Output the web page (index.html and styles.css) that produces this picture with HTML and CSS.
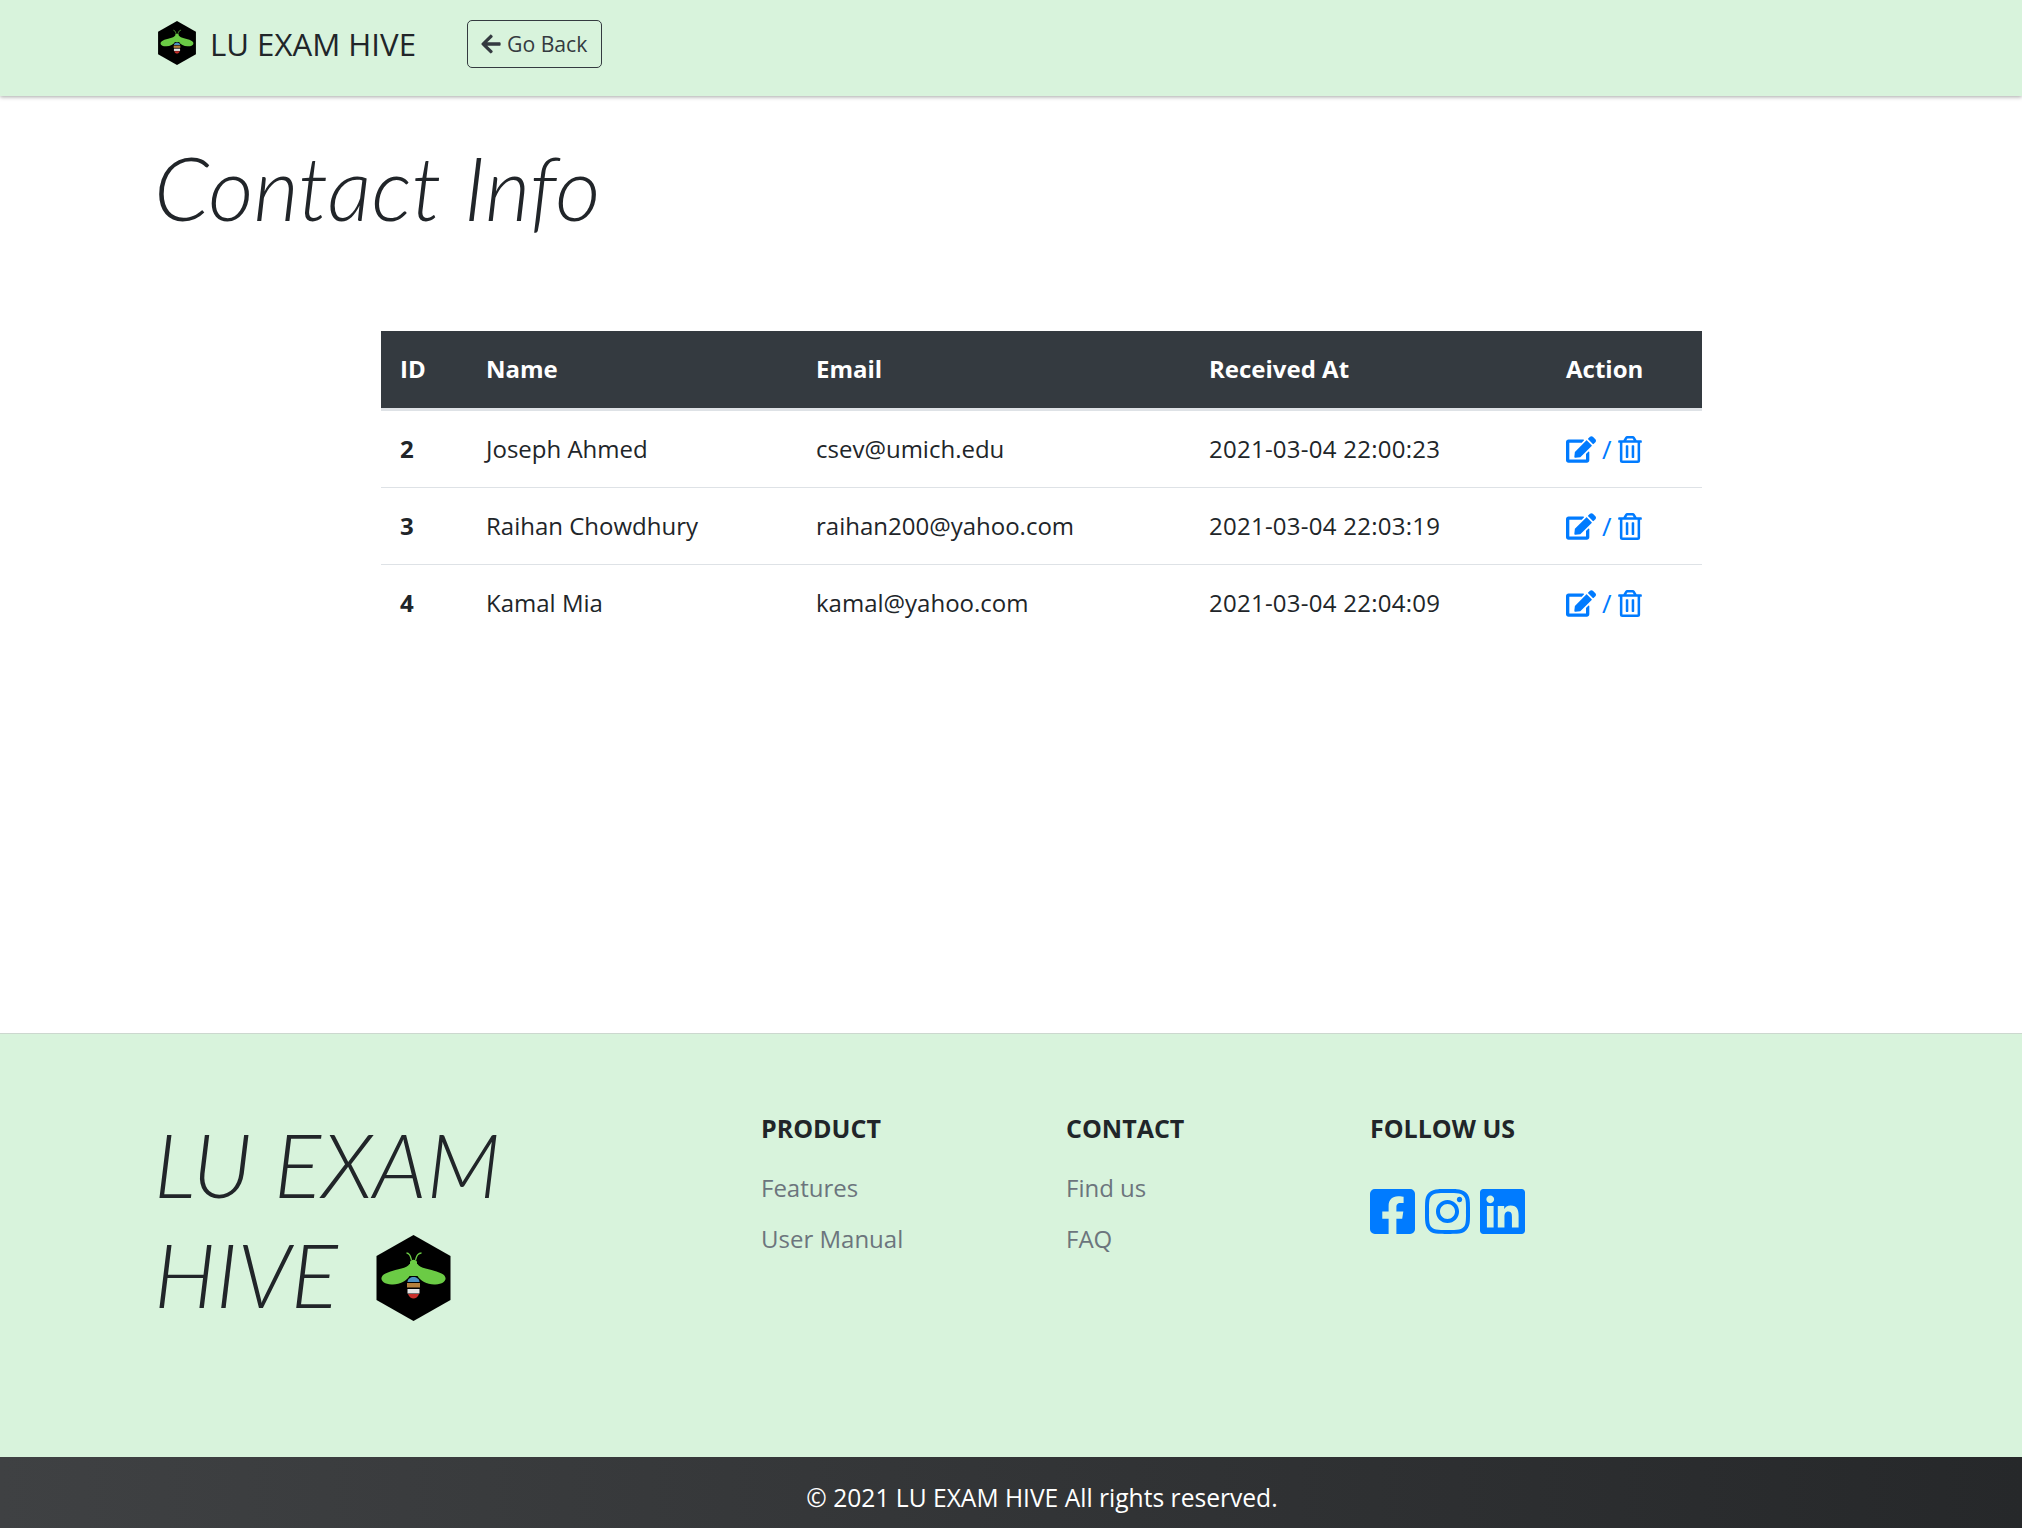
FILE: index.html
```html
<!DOCTYPE html>
<html lang="en">
<head>
    <meta charset="UTF-8">
    <title>LU EXAM HIVE - Contact Info</title>
    <link rel="stylesheet" href="styles.css">
</head>
<body>
    <svg class="icon-defs" width="0" height="0">
        <defs>
            <symbol id="bee" viewBox="0 0 74 86">
                <polygon points="37,0 74,21 74,65 37,86 0,65 0,21" fill="#000"/>
                <path d="M35 25 C34 20 32 18 30 18 M39 25 C40 20 42 18 45 18" fill="none" stroke="#6bcb45" stroke-width="1.3"/>
                <path d="M33.5 32 L33.5 27 C34 24 40 24 40.5 27 L40.5 32 Z" fill="#6bcb45"/>
                <path d="M33 29 C30 34 18 34 9 38.5 C2 42 4 49 15 49.5 C23 50 30 46 33 41 L41 41 C44 46 51 50 59 49.5 C70 49 72 42 65 38.5 C56 34 44 34 41 29 Z" fill="#6bcb45"/>
                <path d="M31 47 C31 44 34 42 37 42 C40 42 43 44 43 47 Z" fill="#4a90c2"/>
                <path d="M30.5 48 L43.5 48 L43.5 52.5 L30.5 52.5 Z" fill="#b5803c"/>
                <path d="M31 54 L43 54 L43 58.5 L31 58.5 Z" fill="#e6e6e6"/>
                <path d="M31.5 59 L42.5 59 C41.5 62 39 63.500 37 63.500 C35 63.500 32.500 62 31.5 59 Z" fill="#c9302c"/>
            </symbol>
            <symbol id="edit" viewBox="0 0 576 512">
                <path d="M402.6 83.2l90.2 90.2c3.8 3.8 3.8 10 0 13.8L274.4 405.6l-92.8 10.3c-12.4 1.4-22.9-9.1-21.5-21.5l10.3-92.8L388.8 83.2c3.8-3.8 10-3.8 13.8 0zm162-22.9l-48.8-48.8c-15.2-15.2-39.9-15.2-55.2 0l-35.4 35.4c-3.8 3.8-3.8 10 0 13.8l90.2 90.2c3.8 3.8 10 3.8 13.8 0l35.4-35.4c15.2-15.3 15.2-40 0-55.2zM384 346.2V448H64V128h229.8c3.2 0 6.2-1.3 8.5-3.5l40-40c7.6-7.6 2.2-20.5-8.5-20.5H48C21.5 64 0 85.5 0 112v352c0 26.5 21.5 48 48 48h352c26.5 0 48-21.5 48-48V306.2c0-10.7-12.9-16-20.5-8.5l-40 40c-2.2 2.3-3.5 5.3-3.5 8.5z"/>
            </symbol>
            <symbol id="trash" viewBox="0 0 448 512">
                <path d="M268 416h24a12 12 0 0 0 12-12V188a12 12 0 0 0-12-12h-24a12 12 0 0 0-12 12v216a12 12 0 0 0 12 12zM432 80h-82.41l-34-56.7A48 48 0 0 0 274.41 0H173.59a48 48 0 0 0-41.16 23.3L98.41 80H16A16 16 0 0 0 0 96v16a16 16 0 0 0 16 16h16v336a48 48 0 0 0 48 48h288a48 48 0 0 0 48-48V128h16a16 16 0 0 0 16-16V96a16 16 0 0 0-16-16zM171.84 50.91A6 6 0 0 1 177 48h94a6 6 0 0 1 5.15 2.91L293.61 80H154.39zM368 464H80V128h288zm-212-48h24a12 12 0 0 0 12-12V188a12 12 0 0 0-12-12h-24a12 12 0 0 0-12 12v216a12 12 0 0 0 12 12z"/>
            </symbol>
        </defs>
    </svg>

    <nav class="navbar">
        <a class="brand" href="#">
            <svg class="brand-logo"><use href="#bee"/></svg>
            <span class="brand-name">LU EXAM HIVE</span>
        </a>
        <a class="btn-back" href="#">
            <svg class="back-arrow" viewBox="0 0 448 512"><path d="M257.5 445.1l-22.2 22.2c-9.4 9.4-24.6 9.4-33.9 0L7 273c-9.4-9.4-9.4-24.6 0-33.9L201.4 44.7c9.4-9.4 24.6-9.4 33.9 0l22.2 22.2c9.5 9.5 9.3 25-.4 34.3L136.6 216H424c13.3 0 24 10.7 24 24v32c0 13.3-10.7 24-24 24H136.6l120.5 114.8c9.8 9.3 10 24.8.4 34.3z"/></svg>
            Go Back
        </a>
    </nav>

    <main class="content">
        <h1 class="page-title">Contact Info</h1>
        <table class="contact-table">
            <thead>
                <tr>
                    <th class="col-id">ID</th>
                    <th class="col-name">Name</th>
                    <th class="col-email">Email</th>
                    <th class="col-date">Received At</th>
                    <th>Action</th>
                </tr>
            </thead>
            <tbody>
                <tr>
                    <th>2</th>
                    <td>Joseph Ahmed</td>
                    <td>csev@umich.edu</td>
                    <td class="date">2021-03-04 22:00:23</td>
                    <td><div class="actions"><a href="#"><svg class="icon-edit"><use href="#edit"/></svg></a><span class="sep">/</span><a href="#"><svg class="icon-trash"><use href="#trash"/></svg></a></div></td>
                </tr>
                <tr>
                    <th>3</th>
                    <td>Raihan Chowdhury</td>
                    <td>raihan200@yahoo.com</td>
                    <td class="date">2021-03-04 22:03:19</td>
                    <td><div class="actions"><a href="#"><svg class="icon-edit"><use href="#edit"/></svg></a><span class="sep">/</span><a href="#"><svg class="icon-trash"><use href="#trash"/></svg></a></div></td>
                </tr>
                <tr>
                    <th>4</th>
                    <td>Kamal Mia</td>
                    <td>kamal@yahoo.com</td>
                    <td class="date">2021-03-04 22:04:09</td>
                    <td><div class="actions"><a href="#"><svg class="icon-edit"><use href="#edit"/></svg></a><span class="sep">/</span><a href="#"><svg class="icon-trash"><use href="#trash"/></svg></a></div></td>
                </tr>
            </tbody>
        </table>
    </main>

    <footer class="site-footer">
        <div class="footer-brand">
            <div>LU EXAM</div>
            <div class="footer-brand-line">HIVE <svg class="footer-logo"><use href="#bee"/></svg></div>
        </div>
        <div class="footer-col">
            <h5>PRODUCT</h5>
            <a href="#">Features</a>
            <a href="#">User Manual</a>
        </div>
        <div class="footer-col">
            <h5>CONTACT</h5>
            <a href="#">Find us</a>
            <a href="#">FAQ</a>
        </div>
        <div class="footer-col">
            <h5>FOLLOW US</h5>
            <div class="social">
                <a href="#"><svg viewBox="0 0 448 448"><path transform="translate(0 -32)" d="M400 32H48A48 48 0 0 0 0 80v352a48 48 0 0 0 48 48h137.25V327.69h-63V256h63v-54.64c0-62.15 37-96.48 93.67-96.48 27.14 0 55.52 4.84 55.52 4.84v61h-31.27c-30.81 0-40.42 19.12-40.42 38.73V256h68.78l-11 71.69h-57.78V480H400a48 48 0 0 0 48-48V80a48 48 0 0 0-48-48z"/></svg></a>
                <a href="#"><svg viewBox="0 0 448 448"><path transform="translate(0 -32)" d="M224.1 141c-63.6 0-114.9 51.3-114.9 114.9s51.3 114.9 114.9 114.9S339 319.5 339 255.9 287.7 141 224.1 141zm0 189.6c-41.1 0-74.7-33.5-74.7-74.7s33.5-74.7 74.7-74.7 74.7 33.5 74.7 74.7-33.6 74.7-74.7 74.7zm146.4-194.3c0 14.9-12 26.8-26.8 26.8-14.9 0-26.8-12-26.8-26.8s12-26.8 26.8-26.8 26.8 12 26.8 26.8zm76.1 27.2c-1.7-35.9-9.9-67.7-36.2-93.9-26.2-26.2-58-34.4-93.9-36.2-37-2.1-147.9-2.1-184.9 0-35.8 1.7-67.6 9.9-93.9 36.1s-34.4 58-36.2 93.9c-2.1 37-2.1 147.9 0 184.9 1.7 35.9 9.9 67.7 36.2 93.9s58 34.4 93.9 36.2c37 2.1 147.9 2.1 184.9 0 35.9-1.7 67.7-9.9 93.9-36.2 26.2-26.2 34.4-58 36.2-93.9 2.1-37 2.1-147.8 0-184.8zM398.8 388c-7.8 19.6-22.9 34.7-42.6 42.6-29.5 11.7-99.5 9-132.1 9s-102.7 2.6-132.1-9c-19.6-7.8-34.7-22.9-42.6-42.6-11.7-29.5-9-99.5-9-132.1s-2.6-102.7 9-132.1c7.8-19.6 22.9-34.7 42.6-42.6 29.5-11.7 99.5-9 132.1-9s102.7-2.6 132.1 9c19.6 7.8 34.7 22.9 42.6 42.6 11.7 29.5 9 99.5 9 132.1s2.7 102.7-9 132.1z"/></svg></a>
                <a href="#"><svg viewBox="0 0 448 448"><path transform="translate(0 -32)" d="M416 32H31.9C14.3 32 0 46.5 0 64.3v383.4C0 465.5 14.3 480 31.9 480H416c17.6 0 32-14.5 32-32.3V64.3c0-17.8-14.4-32.3-32-32.3zM135.4 416H69V202.2h66.5V416zm-33.2-243c-21.3 0-38.5-17.3-38.5-38.5S80.9 96 102.2 96c21.2 0 38.5 17.3 38.5 38.5 0 21.3-17.2 38.5-38.5 38.5zm282.1 243h-66.4V312c0-24.8-.5-56.7-34.5-56.7-34.6 0-39.9 27-39.9 54.9V416h-66.4V202.2h63.7v29.2h.9c8.9-16.8 30.6-34.5 62.9-34.5 67.2 0 79.7 44.3 79.7 101.9V416z"/></svg></a>
            </div>
        </div>
    </footer>

    <div class="copyright">© 2021 LU EXAM HIVE All rights reserved.</div>
</body>
</html>
```

FILE: styles.css
```css
* {
    box-sizing: border-box;
}
html, body {
    height: 100%;
}
body {
    margin: 0;
    display: flex;
    flex-direction: column;
    min-height: 1528px;
    font-family: "Open Sans", "Noto Sans", sans-serif;
    font-size: 24px;
    line-height: 1.5;
    color: #212529;
    background-color: #fff;
}
a {
    text-decoration: none;
    color: #007bff;
}
.icon-defs {
    position: absolute;
}

/* navbar */
.navbar {
    height: 96px;
    flex-shrink: 0;
    display: flex;
    align-items: center;
    padding: 0 0 9px 157px;
    background-color: #d8f3dc;
    box-shadow: 0 1px 4px rgba(0, 0, 0, 0.35);
}
.brand {
    display: flex;
    align-items: center;
    gap: 13px;
    width: 310px;
    font-size: 31.2px;
    color: #212529;
}
.brand-name {
    padding-top: 2px;
}
.brand-logo {
    width: 40px;
    height: 44px;
}
.btn-back {
    display: flex;
    align-items: center;
    gap: 6px;
    width: 135px;
    height: 48px;
    padding-left: 13px;
    border: 1px solid #343a40;
    border-radius: 5px;
    font-size: 21.2px;
    color: #343a40;
}
.back-arrow {
    width: 20px;
    height: 22px;
    fill: #343a40;
}

/* main content */
.content {
    flex: 1;
    padding-left: 154px;
}
.page-title {
    margin: 39px 0 0;
    font-family: Lato, sans-serif;
    font-size: 88px;
    font-weight: 300;
    font-style: italic;
    line-height: 1.2;
}
.contact-table {
    width: 1321px;
    margin: 90px 0 0 227px;
    border-collapse: collapse;
    table-layout: fixed;
}
.contact-table th,
.contact-table td {
    padding: 19px;
    text-align: left;
    font-size: 24px;
    line-height: 38px;
}
.contact-table thead th {
    height: 79px;
    padding: 18px 19px;
    background-color: #343a40;
    color: #fff;
    border-bottom: 3px solid #dee2e6;
}
.contact-table tbody tr + tr th,
.contact-table tbody tr + tr td {
    border-top: 1px solid #dee2e6;
}
.col-id {
    width: 86px;
}
.col-name {
    width: 330px;
}
.col-email {
    width: 393px;
}
.col-date {
    width: 357px;
}
.contact-table .date {
    letter-spacing: 0.25px;
}
.actions {
    display: flex;
    align-items: center;
    height: 38px;
}
.actions a {
    display: flex;
}
.sep {
    margin: 0 6px;
    font-size: 26px;
    color: #007bff;
}
.actions svg {
    height: 27px;
    fill: #007bff;
}
.icon-edit {
    width: 30px;
}
.icon-trash {
    width: 24px;
}

/* footer */
.site-footer {
    height: 424px;
    flex-shrink: 0;
    display: flex;
    padding: 76px 0 0 154px;
    background-color: #d8f3dc;
    border-top: 1px solid #ccd8cf;
}
.footer-brand {
    width: 607px;
    margin-top: -1px;
    font-family: Lato, sans-serif;
    font-size: 88px;
    font-weight: 300;
    font-style: italic;
    line-height: 110px;
}
.footer-brand-line {
    display: flex;
    align-items: center;
    gap: 38px;
}
.footer-logo {
    width: 75px;
    height: 86px;
    margin-top: 8px;
}
.footer-col {
    width: 305px;
}
.footer-col:last-child {
    margin-left: -1px;
}
.footer-col h5 {
    margin: 0 0 24px;
    font-size: 25px;
    font-weight: 700;
    line-height: 36px;
}
.footer-col a {
    display: block;
    margin-bottom: 15px;
    line-height: 36px;
    color: #6c757d;
}
.social {
    display: flex;
    gap: 10px;
    padding-top: 19px;
}
.social a {
    margin: 0;
    line-height: 0;
}
.social svg {
    width: 45px;
    height: 45px;
    fill: #007bff;
}

/* copyright bar */
.copyright {
    height: 71px;
    flex-shrink: 0;
    display: flex;
    align-items: center;
    justify-content: center;
    padding: 11px 0 0 62px;
    color: #fff;
    font-size: 24.6px;
    background: linear-gradient(to right, #3f4143, #26282a);
}
```
